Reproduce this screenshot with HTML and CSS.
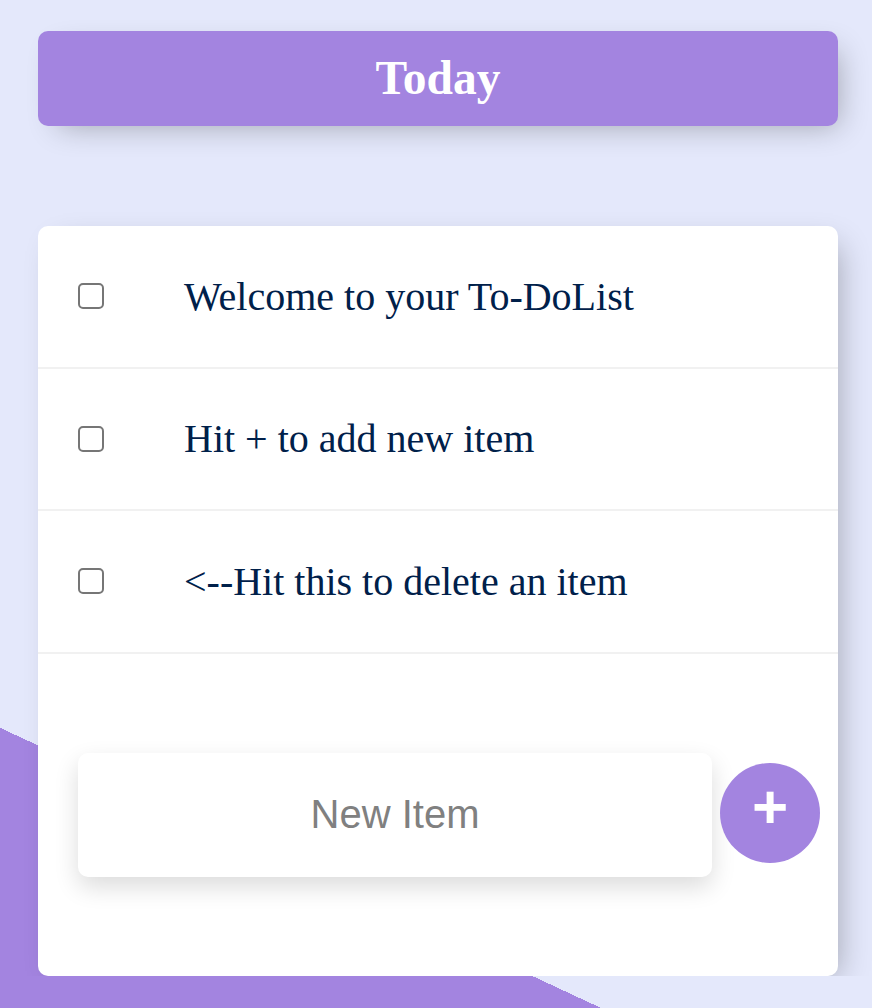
FILE: index.html
```html
<!DOCTYPE html>
<html lang="en">
<head>
<meta charset="utf-8">
<title>To-Do List</title>
<link rel="stylesheet" href="styles.css">
</head>
<body>
<div class="page">
  <div class="box heading">
    <h1>Today</h1>
  </div>
  <div class="box list">
    <div class="item">
      <input type="checkbox">
      <p>Welcome to your To-DoList</p>
    </div>
    <div class="item">
      <input type="checkbox">
      <p>Hit + to add new item</p>
    </div>
    <div class="item">
      <input type="checkbox">
      <p>&lt;--Hit this to delete an item</p>
    </div>
    <form class="new-item">
      <input type="text" name="newItem" placeholder="New Item" autocomplete="off">
      <button type="button" class="add">+</button>
    </form>
  </div>
</div>
</body>
</html>
```
FILE: styles.css
```css
html {
  background: linear-gradient(25deg, #A384E0 254px, #E4E8FB 254px) 0 0 / 872px 1008px no-repeat #E4E8FB;
}

body {
  margin: 0;
  font-family: "Liberation Serif", "Times New Roman", serif;
}

.page {
  padding: 31px 0 0 38px;
}

.box {
  width: 800px;
  background: #ffffff;
  border-radius: 10px;
  box-shadow: 10px 10px 30px -10px rgba(0, 0, 0, 0.3);
}

.heading {
  background: #A384E0;
  height: 95px;
  display: flex;
  align-items: center;
  justify-content: center;
}

.heading h1 {
  margin: 0;
  color: #ffffff;
  font-size: 47.5px;
  font-weight: 700;
  line-height: 1;
}

.list {
  margin-top: 100px;
}

.item {
  display: flex;
  align-items: center;
  height: 140.5px;
  border-bottom: 2px solid #F1F1F1;
}

.item input[type="checkbox"] {
  appearance: none;
  -webkit-appearance: none;
  box-sizing: border-box;
  width: 26px;
  height: 26px;
  margin: 0 40px;
  border: 2px solid #767676;
  border-radius: 5px;
  background: #ffffff;
  flex: none;
}

.item p {
  margin: 0;
  padding: 0 40px;
  font-size: 40px;
  color: #00204a;
}

.new-item {
  display: flex;
  align-items: center;
  gap: 8px;
  height: 322.5px;
  padding-left: 40px;
  margin: 0;
}

.new-item input[type="text"] {
  box-sizing: border-box;
  width: 634px;
  height: 124px;
  border: none;
  border-radius: 10px;
  background: #ffffff;
  box-shadow: 0 10px 24px rgba(0, 0, 0, 0.14);
  font-family: "Liberation Sans", Arial, sans-serif;
  font-size: 40px;
  text-align: center;
  outline: none;
  padding: 0;
}

.new-item input[type="text"]::placeholder {
  color: #808080;
  opacity: 1;
}

.add {
  width: 100px;
  height: 100px;
  margin-bottom: 4px;
  border: 0;
  border-radius: 50%;
  background: #A384E0;
  color: #ffffff;
  font-family: "Liberation Sans", Arial, sans-serif;
  font-size: 62px;
  font-weight: 700;
  line-height: 1;
  padding: 0 0 12px;
  display: flex;
  align-items: center;
  justify-content: center;
  flex: none;
}
```
